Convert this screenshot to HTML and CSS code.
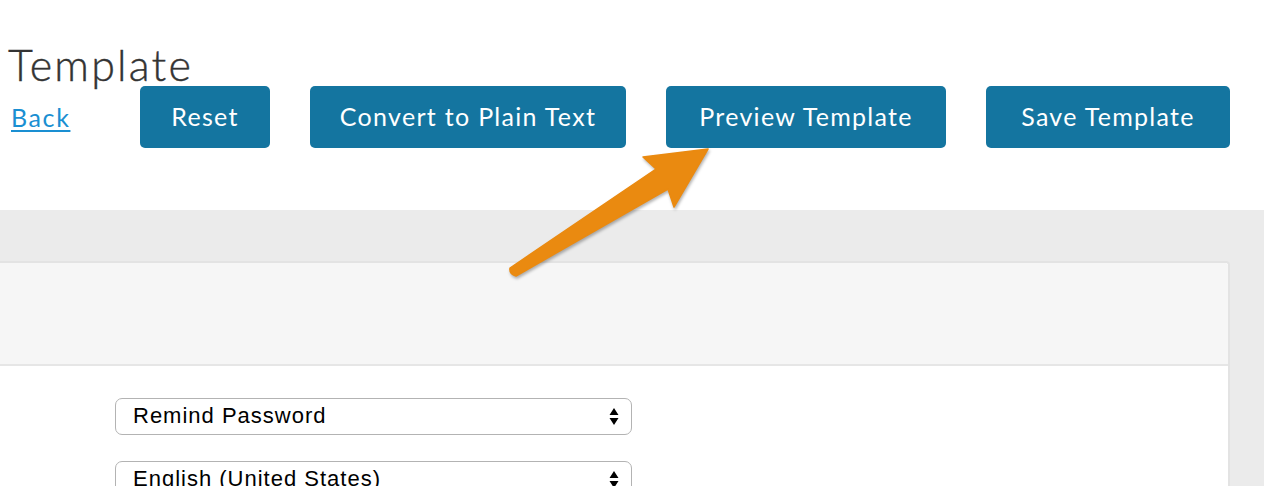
FILE: index.html
```html
<!DOCTYPE html>
<html lang="en">
<head>
<meta charset="utf-8">
<title>Template</title>
<link rel="stylesheet" href="styles.css">
</head>
<body>
<div class="page">
  <header class="top">
    <h1 class="title">Template</h1>
    <div class="actions">
      <div class="back-cell"><a class="back" href="#">Back</a></div>
      <button class="btn btn-reset">Reset</button>
      <button class="btn btn-convert">Convert to Plain Text</button>
      <button class="btn btn-preview">Preview Template</button>
      <button class="btn btn-save">Save Template</button>
    </div>
  </header>
  <section class="workspace">
    <div class="panel">
      <div class="panel-head"></div>
      <div class="panel-body">
        <div class="select">
          <span class="select-text">Remind Password</span>
          <svg class="select-arrows" width="10" height="20" viewBox="0 0 10 20"><path d="M5 1 L9.5 8 L0.5 8 Z M0.5 11 L9.5 11 L5 18 Z" fill="#000"/></svg>
        </div>
        <div class="select">
          <span class="select-text">English (United States)</span>
          <svg class="select-arrows" width="10" height="20" viewBox="0 0 10 20"><path d="M5 1 L9.5 8 L0.5 8 Z M0.5 11 L9.5 11 L5 18 Z" fill="#000"/></svg>
        </div>
      </div>
    </div>
  </section>
  <svg class="pointer" width="1264" height="486" viewBox="0 0 1264 486">
    <path d="M708 149 L643 157 L656 169 L510 268 Q509 274 516 276 L668 189 L674 207 Z" fill="#ea8a10" stroke="#ea8a10" stroke-width="1.5" stroke-linejoin="round"/>
  </svg>
</div>
</body>
</html>
```

FILE: styles.css
```css
* { box-sizing: border-box; }
html, body { margin: 0; padding: 0; background: #fff; }
body { font-family: Lato, "Open Sans", sans-serif; overflow: hidden; }
.page { position: relative; width: 1264px; height: 486px; overflow: hidden; }

.top { padding: 44px 0 0 8px; height: 210px; }
.title {
  margin: 0;
  font-weight: 300;
  font-size: 43px;
  line-height: 42px;
  color: #333;
  letter-spacing: 2.2px;
  -webkit-text-stroke: 0.4px #333;
}
.actions { display: flex; align-items: center; gap: 40px; }
.back-cell { width: 92px; padding-left: 3px; }
.back {
  color: #1a8fd2;
  font-size: 25px;
  letter-spacing: 1.6px;
  text-decoration: underline;
  text-underline-offset: 3px;
  text-decoration-thickness: 2px;
}
.btn {
  height: 62px;
  border: none;
  border-radius: 5px;
  background: #1475a0;
  color: #fff;
  font-family: Lato, "Open Sans", sans-serif;
  font-size: 25px;
  letter-spacing: 1.3px;
  padding: 0 0 2px 0;
  text-align: center;
}
.btn-reset { width: 130px; }
.btn-convert { width: 316px; }
.btn-preview { width: 280px; }
.btn-save { width: 244px; }

.workspace {
  background: #ebebeb;
  height: 276px;
  padding: 51px 34px 0 0;
}
.panel {
  margin-left: -10px;
  height: 100%;
  background: #fff;
  border: 2px solid #e3e3e3;
  border-bottom: none;
  border-radius: 0 4px 0 0;
}
.panel-head {
  height: 103px;
  background: #f6f6f6;
  border-bottom: 2px solid #e6e6e6;
  border-radius: 0 3px 0 0;
}
.panel-body { padding: 32px 0 0 123px; display: flex; flex-direction: column; gap: 26px; }
.select {
  width: 517px;
  height: 37px;
  border: 1.5px solid #b3b3b3;
  border-radius: 7px;
  background: #fff;
  display: flex;
  align-items: center;
  justify-content: space-between;
  padding: 0 12px 2px 17px;
}
.select-text {
  font-family: "Liberation Sans", Arial, sans-serif;
  font-size: 22px;
  letter-spacing: 1px;
  color: #000;
}
.select-arrows { display: block; margin-top: 2px; }

.pointer {
  position: absolute;
  left: 0;
  top: 0;
  pointer-events: none;
  filter: drop-shadow(1px 2px 1.5px rgba(0,0,0,0.3));
}
```
